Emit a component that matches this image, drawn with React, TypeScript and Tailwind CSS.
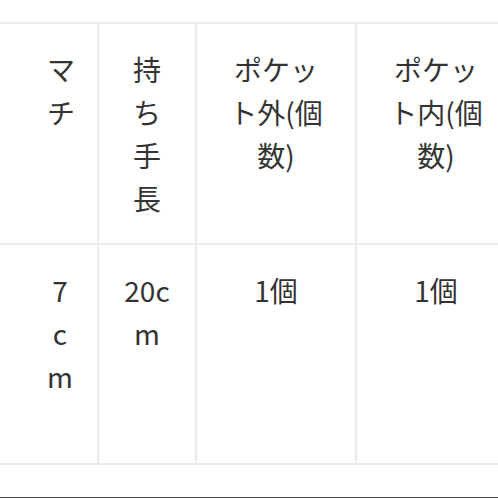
const headers = ["", "マチ", "持ち手長", "ポケット外(個数)", "ポケット内(個数)"];
const values = ["", "7cm", "20cm", "1個", "1個"];

function Cell({ text }: { text: string }) {
  return (
    <div className="bg-white px-6 py-6 text-center text-[28px] leading-[43px] text-[#333333] break-all">
      {text}
    </div>
  );
}

export default function App() {
  return (
    <main
      className="w-[498px] h-[498px] overflow-hidden bg-white flex flex-col"
      style={{ fontFamily: '"Noto Sans CJK JP", "Noto Sans", sans-serif' }}
    >
      <div className="pt-[22px]">
        <div className="grid grid-cols-[21px_74px_96px_158px_158px] grid-rows-[219px_218px] gap-[2px] py-[2px] bg-[#ebebeb] w-max">
          {headers.map((h, i) => (
            <Cell key={"h" + i} text={h} />
          ))}
          {values.map((v, i) => (
            <Cell key={"v" + i} text={v} />
          ))}
        </div>
      </div>
      <div className="mt-[32px] h-px bg-[#4a4a4a]" />
    </main>
  );
}
